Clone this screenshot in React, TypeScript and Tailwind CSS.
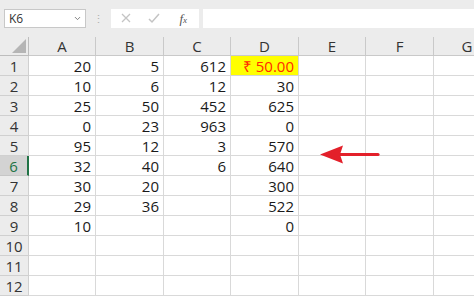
import { ChevronDown } from 'lucide-react';

const COLS = ['A', 'B', 'C', 'D', 'E', 'F', 'G'];
const WIDTHS = [67, 68, 67, 68, 67, 68, 67];

// rows of A..D values
const DATA: (string | null)[][] = [
  ['20', '5', '612', '₹ 50.00'],
  ['10', '6', '12', '30'],
  ['25', '50', '452', '625'],
  ['0', '23', '963', '0'],
  ['95', '12', '3', '570'],
  ['32', '40', '6', '640'],
  ['30', '20', null, '300'],
  ['29', '36', null, '522'],
  ['10', null, null, '0'],
  [null, null, null, null],
  [null, null, null, null],
  [null, null, null, null],
];

const font = { fontFamily: '"Open Sans", "Liberation Sans", sans-serif' };

function FormulaBar() {
  return (
    <div className="h-[37px] bg-[#ececec] pt-[9px] flex items-start">
      <div className="ml-[4px] w-[82px] h-[19px] bg-white border border-[#c8c8c8] flex items-center justify-between pl-[4px] pr-[3px]">
        <span className="text-[12px] text-[#333]">K6</span>
        <ChevronDown size={9} strokeWidth={2.5} className="text-[#777]" />
      </div>
      <div className="w-[25px] h-[19px] flex items-center justify-center">
        <span className="text-[#b0b0b0] text-[11px] leading-none tracking-tighter">⋮</span>
      </div>
      <div className="w-[88px] h-[19px] bg-white flex items-center">
        <svg width="88" height="19" viewBox="0 0 88 19">
          <path d="M11 5 L19 13 M19 5 L11 13" stroke="#c4c4c4" strokeWidth="1.3" fill="none" />
          <path d="M38 10 L41 13 L48 5" stroke="#c4c4c4" strokeWidth="1.5" fill="none" />
        </svg>
      </div>
      <div className="relative -ml-[88px] w-[88px] h-[19px] flex items-center justify-end pr-[12px]">
        <span className="text-[13px] italic text-[#555]" style={{ fontFamily: '"Liberation Serif", serif' }}>
          f<span className="text-[9px]">x</span>
        </span>
      </div>
      <div className="ml-[4px] flex-1 h-[19px] bg-white" />
    </div>
  );
}

export default function App() {
  return (
    <div className="w-[474px] h-[296px] overflow-hidden bg-white relative" style={font}>
      <FormulaBar />
      <div className="flex">
        <div className="w-[29px] shrink-0">
          <div className="h-[19px] bg-[#ececec] border-b border-r border-[#bdbdbd] relative">
            <svg className="absolute right-[2px] bottom-[2px]" width="14" height="14" viewBox="0 0 14 14">
              <polygon points="14,0 14,14 0,14" fill="#b5b5b5" />
            </svg>
          </div>
          {DATA.map((_, i) => (
            <div
              key={i}
              className={
                i === 5
                  ? 'h-[20px] bg-[#d3d3d3] border-b border-[#c6c6c6] border-r-2 border-r-[#217346] text-[#217346] text-[15px] leading-[20px] text-center'
                  : 'h-[20px] bg-[#ececec] border-b border-r border-[#d0d0d0] text-[#333] text-[15px] leading-[20px] text-center'
              }
            >
              {i + 1}
            </div>
          ))}
        </div>
        {COLS.map((c, ci) => (
          <div key={c} className="shrink-0" style={{ width: WIDTHS[ci] }}>
            <div className="h-[19px] bg-[#ececec] border-b border-r border-[#c9c9c9] text-[15px] leading-[19px] text-center text-[#333]">
              {c}
            </div>
            {DATA.map((row, ri) => {
              const v = ci < 4 ? row[ci] : null;
              const hi = ci === 3 && ri === 0;
              return (
                <div
                  key={ri}
                  className={
                    hi
                      ? 'h-[20px] bg-[#ffff00] border-b border-r border-[#d4d4d4] text-right pr-[4px] text-[15px] leading-[20px] text-[#ff2a00]'
                      : 'h-[20px] border-b border-r border-[#d9d9d9] text-right pr-[4px] text-[15px] leading-[20px] text-[#1a1a1a]'
                  }
                >
                  {v}
                </div>
              );
            })}
          </div>
        ))}
      </div>
      <svg className="absolute left-[318px] top-[144px]" width="62" height="21" viewBox="0 0 62 21">
        <line x1="20" y1="10.5" x2="60" y2="10.5" stroke="#e3202a" strokeWidth="3.2" strokeLinecap="round" />
        <polygon points="2,10.5 25,1.5 22,10.5 25,19.5" fill="#e3202a" />
      </svg>
    </div>
  );
}
